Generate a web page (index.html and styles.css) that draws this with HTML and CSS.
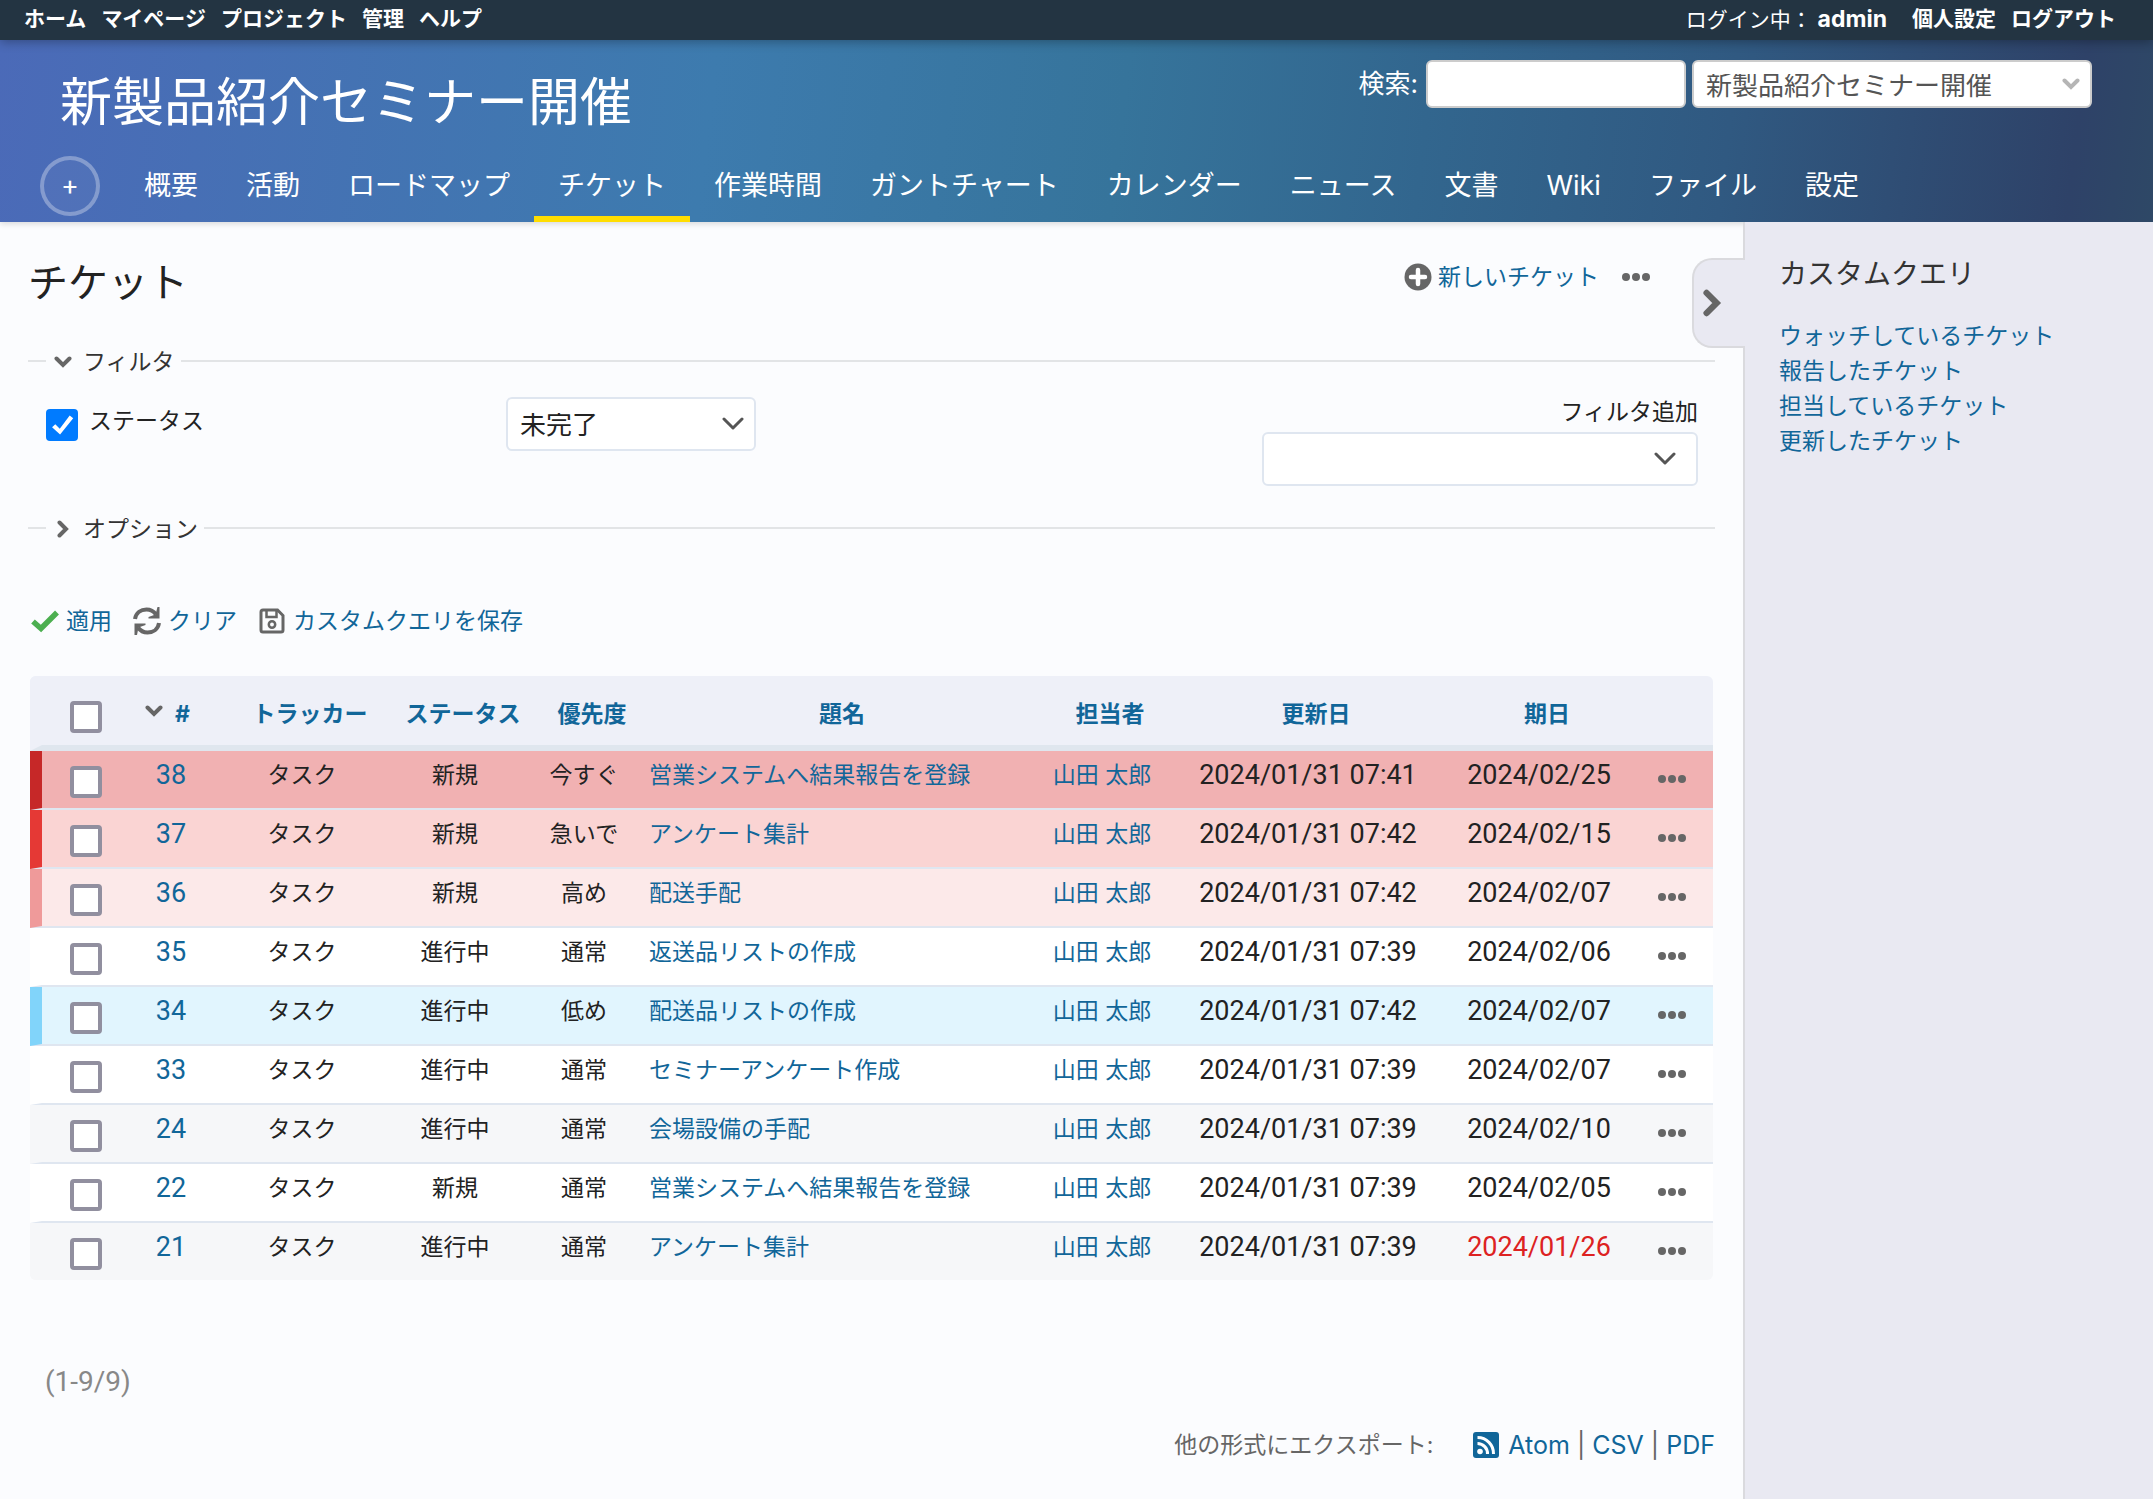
FILE: index.html
```html
<!DOCTYPE html>
<html lang="ja">
<head>
<meta charset="utf-8">
<title>チケット - 新製品紹介セミナー開催</title>
<link rel="stylesheet" href="styles.css">
</head>
<body>
<svg class="sprite" aria-hidden="true">
  <symbol id="i-down" viewBox="0 0 18 12"><path d="M2.500 2.500 9 9l6.500-6.500" fill="none" stroke="currentColor" stroke-width="4" stroke-linecap="round" stroke-linejoin="miter"/></symbol>
  <symbol id="i-down-thin" viewBox="0 0 22 14"><path d="M2 2l9 9 9-9" fill="none" stroke="currentColor" stroke-width="3" stroke-linecap="round" stroke-linejoin="round"/></symbol>
  <symbol id="i-right" viewBox="0 0 12 18"><path d="M2.500 2.500 9 9l-6.500 6.500" fill="none" stroke="currentColor" stroke-width="4" stroke-linecap="round"/></symbol>
  <symbol id="i-dots" viewBox="0 0 28 8"><circle cx="4" cy="4" r="4"/><circle cx="14" cy="4" r="4"/><circle cx="24" cy="4" r="4"/></symbol>
  <symbol id="i-add" viewBox="0 0 28 28"><circle cx="14" cy="14" r="13.500"/><path d="M14 7v14M7 14h14" stroke="#fff" stroke-width="4.500" stroke-linecap="round"/></symbol>
  <symbol id="i-check" viewBox="0 0 30 24"><path d="M3 12.500 11 19.500 27 3.500" fill="none" stroke="currentColor" stroke-width="5.500"/></symbol>
  <symbol id="i-reload" viewBox="0 0 30 30"><path d="M3 13C4 6.500 9 3.500 14.500 3.500c4 0 7 1.500 9.500 5M27 17c-1 6.500-6 9.500-11.500 9.500-4 0-7-1.500-9.500-5" fill="none" stroke="currentColor" stroke-width="4"/><path d="M27.500 1v11.500H16.500v-1.500l7-2.500 2-7.500zM2.500 29V17.500h11V19l-7 2.500-1.500 7.500z" fill="currentColor"/></symbol>
  <symbol id="i-save" viewBox="0 0 26 26"><path d="M4 2h14.500L24 7.500V22q0 2-2 2H4q-2 0-2-2V4q0-2 2-2z" fill="none" stroke="currentColor" stroke-width="3"/><path d="M7.500 2.500v6.500h10V2.500" fill="none" stroke="currentColor" stroke-width="2.500"/><circle cx="13" cy="16.500" r="3.200" fill="none" stroke="currentColor" stroke-width="2.500"/></symbol>
  <symbol id="i-feed" viewBox="0 0 26 26"><rect width="26" height="26" rx="3" fill="currentColor"/><circle cx="7" cy="19.500" r="2.800" fill="#fff"/><path d="M4.500 11.500A10 10 0 0 1 14.500 22M4.500 5.500A16 16 0 0 1 20.500 22" fill="none" stroke="#fff" stroke-width="3"/></symbol>
</svg>

<div class="topbar">
  <nav class="topnav">
    <a href="#">ホーム</a><a href="#">マイページ</a><a href="#">プロジェクト</a><a href="#">管理</a><a href="#">ヘルプ</a>
  </nav>
  <div class="account">
    <span class="logged">ログイン中： <a class="user" href="#">admin</a></span>
    <a href="#">個人設定</a><a href="#">ログアウト</a>
  </div>
</div>

<header class="header">
  <div class="header-row">
    <h1>新製品紹介セミナー開催</h1>
    <form class="search">
      <label for="q">検索:</label>
      <input id="q" type="text">
      <div class="picker jump">
        <select aria-label="プロジェクト"><option>新製品紹介セミナー開催</option></select>
        <svg><use href="#i-down"/></svg>
      </div>
    </form>
  </div>
  <nav class="menu">
    <button class="plus" type="button">+</button>
    <a href="#">概要</a><a href="#">活動</a><a href="#">ロードマップ</a><a class="current" href="#">チケット</a><a href="#">作業時間</a><a href="#">ガントチャート</a><a href="#">カレンダー</a><a href="#">ニュース</a><a href="#">文書</a><a href="#">Wiki</a><a href="#">ファイル</a><a href="#">設定</a>
  </nav>
</header>

<div class="page">
  <main class="main">
    <div class="title-row">
      <h2>チケット</h2>
      <div class="contextual">
        <a href="#"><svg class="add"><use href="#i-add"/></svg>新しいチケット</a>
        <button class="dots" type="button" aria-label="操作"><svg><use href="#i-dots"/></svg></button>
      </div>
    </div>

    <fieldset class="group filters">
      <legend><button type="button"><svg class="tri"><use href="#i-down"/></svg>フィルタ</button></legend>
      <div class="filter-body">
        <div class="filter-name"><input id="st" type="checkbox" checked><label for="st">ステータス</label></div>
        <div class="picker status">
          <select aria-label="ステータスの条件"><option>未完了</option></select>
          <svg><use href="#i-down-thin"/></svg>
        </div>
        <div class="filter-add">
          <label for="add">フィルタ追加</label>
          <div class="picker">
            <select id="add"><option></option></select>
            <svg><use href="#i-down-thin"/></svg>
          </div>
        </div>
      </div>
    </fieldset>
    <fieldset class="group">
      <legend><button type="button"><svg class="tri"><use href="#i-right"/></svg>オプション</button></legend>
    </fieldset>

    <div class="actions">
      <a href="#"><svg class="ok"><use href="#i-check"/></svg>適用</a>
      <a href="#"><svg><use href="#i-reload"/></svg>クリア</a>
      <a href="#"><svg class="save"><use href="#i-save"/></svg>カスタムクエリを保存</a>
    </div>

    <table class="issues">
      <colgroup><col class="c-check"><col class="c-id"><col class="c-tracker"><col class="c-status"><col class="c-priority"><col><col class="c-user"><col class="c-updated"><col class="c-due"><col class="c-menu"></colgroup>
      <thead>
        <tr><th class="check"><input type="checkbox" aria-label="すべて選択"></th><th class="id"><a href="#"><svg><use href="#i-down"/></svg>#</a></th><th><a href="#">トラッカー</a></th><th><a href="#">ステータス</a></th><th><a href="#">優先度</a></th><th><a href="#">題名</a></th><th><a href="#">担当者</a></th><th><a href="#">更新日</a></th><th><a href="#">期日</a></th><th></th></tr>
      </thead>
      <tbody>
        <tr class="p5"><td class="check"><input type="checkbox" aria-label="38"></td><td class="num"><a href="#">38</a></td><td>タスク</td><td>新規</td><td>今すぐ</td><td class="subject"><a href="#">営業システムへ結果報告を登録</a></td><td><a href="#">山田 太郎</a></td><td class="num">2024/01/31 07:41</td><td class="num">2024/02/25</td><td class="menu-cell"><button class="dots" type="button" aria-label="操作"><svg><use href="#i-dots"/></svg></button></td></tr>
        <tr class="p4"><td class="check"><input type="checkbox" aria-label="37"></td><td class="num"><a href="#">37</a></td><td>タスク</td><td>新規</td><td>急いで</td><td class="subject"><a href="#">アンケート集計</a></td><td><a href="#">山田 太郎</a></td><td class="num">2024/01/31 07:42</td><td class="num">2024/02/15</td><td class="menu-cell"><button class="dots" type="button" aria-label="操作"><svg><use href="#i-dots"/></svg></button></td></tr>
        <tr class="p3"><td class="check"><input type="checkbox" aria-label="36"></td><td class="num"><a href="#">36</a></td><td>タスク</td><td>新規</td><td>高め</td><td class="subject"><a href="#">配送手配</a></td><td><a href="#">山田 太郎</a></td><td class="num">2024/01/31 07:42</td><td class="num">2024/02/07</td><td class="menu-cell"><button class="dots" type="button" aria-label="操作"><svg><use href="#i-dots"/></svg></button></td></tr>
        <tr><td class="check"><input type="checkbox" aria-label="35"></td><td class="num"><a href="#">35</a></td><td>タスク</td><td>進行中</td><td>通常</td><td class="subject"><a href="#">返送品リストの作成</a></td><td><a href="#">山田 太郎</a></td><td class="num">2024/01/31 07:39</td><td class="num">2024/02/06</td><td class="menu-cell"><button class="dots" type="button" aria-label="操作"><svg><use href="#i-dots"/></svg></button></td></tr>
        <tr class="p1"><td class="check"><input type="checkbox" aria-label="34"></td><td class="num"><a href="#">34</a></td><td>タスク</td><td>進行中</td><td>低め</td><td class="subject"><a href="#">配送品リストの作成</a></td><td><a href="#">山田 太郎</a></td><td class="num">2024/01/31 07:42</td><td class="num">2024/02/07</td><td class="menu-cell"><button class="dots" type="button" aria-label="操作"><svg><use href="#i-dots"/></svg></button></td></tr>
        <tr><td class="check"><input type="checkbox" aria-label="33"></td><td class="num"><a href="#">33</a></td><td>タスク</td><td>進行中</td><td>通常</td><td class="subject"><a href="#">セミナーアンケート作成</a></td><td><a href="#">山田 太郎</a></td><td class="num">2024/01/31 07:39</td><td class="num">2024/02/07</td><td class="menu-cell"><button class="dots" type="button" aria-label="操作"><svg><use href="#i-dots"/></svg></button></td></tr>
        <tr class="odd"><td class="check"><input type="checkbox" aria-label="24"></td><td class="num"><a href="#">24</a></td><td>タスク</td><td>進行中</td><td>通常</td><td class="subject"><a href="#">会場設備の手配</a></td><td><a href="#">山田 太郎</a></td><td class="num">2024/01/31 07:39</td><td class="num">2024/02/10</td><td class="menu-cell"><button class="dots" type="button" aria-label="操作"><svg><use href="#i-dots"/></svg></button></td></tr>
        <tr><td class="check"><input type="checkbox" aria-label="22"></td><td class="num"><a href="#">22</a></td><td>タスク</td><td>新規</td><td>通常</td><td class="subject"><a href="#">営業システムへ結果報告を登録</a></td><td><a href="#">山田 太郎</a></td><td class="num">2024/01/31 07:39</td><td class="num">2024/02/05</td><td class="menu-cell"><button class="dots" type="button" aria-label="操作"><svg><use href="#i-dots"/></svg></button></td></tr>
        <tr class="odd"><td class="check"><input type="checkbox" aria-label="21"></td><td class="num"><a href="#">21</a></td><td>タスク</td><td>進行中</td><td>通常</td><td class="subject"><a href="#">アンケート集計</a></td><td><a href="#">山田 太郎</a></td><td class="num">2024/01/31 07:39</td><td class="num overdue">2024/01/26</td><td class="menu-cell"><button class="dots" type="button" aria-label="操作"><svg><use href="#i-dots"/></svg></button></td></tr>
      </tbody>
    </table>

    <p class="pages">(1-9/9)</p>
    <p class="export"><span class="export-label">他の形式にエクスポート:</span><svg><use href="#i-feed"/></svg><span><a href="#">Atom</a> | <a href="#">CSV</a> | <a href="#">PDF</a></span></p>
  </main>

  <aside class="sidebar">
    <button class="collapse" type="button" aria-label="サイドバーを隠す"><svg><use href="#i-right"/></svg></button>
    <h3>カスタムクエリ</h3>
    <ul>
      <li><a href="#">ウォッチしているチケット</a></li>
      <li><a href="#">報告したチケット</a></li>
      <li><a href="#">担当しているチケット</a></li>
      <li><a href="#">更新したチケット</a></li>
    </ul>
  </aside>
</div>
</body>
</html>
```
FILE: styles.css
```css
* { box-sizing: border-box; }
body {
  margin: 0;
  min-height: 100vh;
  display: flex;
  flex-direction: column;
  background: #fbfcfe;
  color: #222;
  font: 23px/24px Inter, "Noto Sans CJK JP", sans-serif;
}
a { color: #169; text-decoration: none; }
button { border: 0; padding: 0; background: none; color: inherit; font: inherit; }
h1, h2, h3, p, ul { margin: 0; padding: 0; font-weight: 400; }
input, select { margin: 0; font: inherit; }
svg { display: block; flex: none; }
.sprite { position: absolute; width: 0; height: 0; }

/* top bar */
.topbar {
  position: relative;
  z-index: 1;
  display: flex;
  justify-content: space-between;
  height: 40px;
  padding: 0 37px 0 24px;
  background: #233442;
  box-shadow: 0 2px 10px rgba(0, 0, 0, .3);
  color: #fff;
  font-size: 21px;
  line-height: 38px;
}
.topbar a { color: #fff; font-weight: 700; }
.topnav, .account { display: flex; gap: 15px; }
.logged { margin-right: 10px; }
.topbar .user { font-size: 23px; }

/* project header */
.header {
  background: linear-gradient(97deg, #4b6ab8 0%, #3d7bae 33%, #36749b 52%, #32668e 66%, #305981 80%, #2e4268 96%, #2e4866 100%);
  box-shadow: 0 2px 6px rgba(0, 0, 0, .14);
  color: #fff;
  font-size: 27px;
}
.header-row { display: flex; justify-content: space-between; align-items: flex-start; padding: 20px 61px 0 60px; }
h1 { padding-top: 10px; font-size: 52px; line-height: 66px; }
.search { display: flex; align-items: center; gap: 6px; }
.search label { margin-right: 2px; font-size: 26px; }
.search input { width: 260px; height: 48px; border: 2px solid #ccc; border-radius: 6px; background: #fff; }
.picker { display: grid; align-items: center; }
.picker > * { grid-area: 1 / 1; }
.picker select {
  appearance: none;
  width: 100%;
  height: 54px;
  padding: 2px 12px 0;
  border: 2px solid #dfe6f0;
  border-radius: 6px;
  background: #fff;
  color: #222;
  font-size: 26px;
}
.picker svg { width: 22px; height: 14px; margin-right: 22px; justify-self: end; color: #555; pointer-events: none; }
.status svg { margin-right: 12px; }
.jump { width: 400px; }
.jump select { height: 48px; padding-top: 4px; border-color: #ccc; color: #555; }
.jump svg { width: 18px; height: 12px; margin-right: 12px; color: #b5b5b5; }

.menu { display: flex; padding: 20px 0 0 40px; }
.menu .plus {
  width: 60px;
  height: 60px;
  margin-right: 20px;
  border: 4px solid rgba(255, 255, 255, .3);
  border-radius: 50%;
  background: rgba(255, 255, 255, .04);
}
.menu a { height: 66px; padding: 0 24px; color: #fff; line-height: 60px; }
.menu .current { border-bottom: 6px solid #fd0; }

/* page */
.page { flex: 1; display: flex; }
.main { flex: 1; min-width: 0; padding: 31px 28px 0; }
.title-row { display: flex; justify-content: space-between; align-items: flex-start; }
h2 { font-size: 40px; line-height: 60px; }
.contextual { display: flex; align-items: center; gap: 23px; margin: 9px 65px 0 0; line-height: 30px; }
.contextual a { display: flex; align-items: center; gap: 6px; }
.add { width: 28px; height: 28px; fill: #666; }
.dots svg { width: 28px; height: 8px; fill: #666; }

.group { margin: 33px 0 0; padding: 0; border: 0; border-top: 2px solid #e2e4e6; min-width: 0; }
.group + .group { margin-top: 27px; }
.group legend { margin-left: 18px; padding: 2px 6px 0 8px; line-height: 28px; color: #333; }
.group legend button { display: flex; align-items: center; gap: 11px; }
.tri { width: 18px; height: 18px; color: #666; }
.filter-body { display: grid; grid-template-columns: 460px 250px 1fr; padding: 21px 17px 0 18px; align-items: start; }
.filter-name { display: flex; align-items: flex-start; gap: 11px; padding-top: 12px; }
.filter-add { display: grid; justify-items: end; gap: 8px; padding-top: 3px; }
.filter-add .picker { width: 436px; }

input[type="checkbox"] {
  appearance: none;
  display: block;
  width: 32px;
  height: 32px;
  border: 4px solid #918f9f;
  border-radius: 4px;
  background: #fff;
}
input[type="checkbox"]:checked { border: 0; background: #007bff; }
input[type="checkbox"]:checked::before {
  content: "";
  display: block;
  width: 32px;
  height: 32px;
  background: #fff;
  clip-path: polygon(19% 57%, 29% 48%, 43% 62%, 74% 20%, 85% 29%, 44% 80%);
}

.actions { display: flex; gap: 20px; margin: 63px 0 0 2px; line-height: 30px; }
.actions a { display: flex; align-items: center; gap: 6px; }
.actions svg { width: 30px; height: 30px; color: #666; }
.actions .ok { height: 24px; color: #4caf50; }
.actions .save { width: 26px; height: 26px; margin: 0 2px; }

/* issue list */
.issues {
  table-layout: fixed;
  width: calc(100% - 4px);
  margin: 40px 2px 0;
  border-spacing: 0;
  border-radius: 6px;
  overflow: hidden;
  text-align: center;
}
.c-check { width: 95px; }
.c-id { width: 108px; }
.c-tracker { width: 154px; }
.c-status { width: 152px; }
.c-priority { width: 106px; }
.c-user { width: 142px; }
.c-updated { width: 270px; }
.c-due { width: 192px; }
.c-menu { width: 70px; }
.issues th { height: 75px; padding: 26px 0 0; border-bottom: 6px solid #dfe6ee; background: #eef0f8; vertical-align: top; }
.issues .id a { display: flex; align-items: center; gap: 12px; padding-left: 20px; }
.id svg { width: 18px; height: 12px; margin-bottom: 6px; color: #666; }
.issues td { height: 59px; padding: 12px 16px 0 0; border-bottom: 2px solid #dfe6f0; background: #fff; vertical-align: top; }
.issues tr:last-child td { height: 57px; border-bottom: 0; }
.issues .subject { padding-left: 4px; text-align: left; }
.issues .num { font-family: Roboto, sans-serif; font-size: 27px; white-space: nowrap; }
.issues .check { padding: 15px 0 0 28px; border-left: 12px solid #fff; }
.issues th.check { padding-top: 25px; border-left-color: #eef0f8; }
.issues .menu-cell { padding: 16px 0 0 15px; text-align: left; }
.dots { display: flex; align-items: center; height: 24px; }
.issues .odd td { background: #f6f7f9; }
.issues .odd .check { border-left-color: #f6f7f9; }
.issues .p5 td { background: #f1b1b2; }
.issues .p5 .check { border-left-color: #c62828; }
.issues .p4 td { background: #fad4d3; }
.issues .p4 .check { border-left-color: #e53935; }
.issues .p3 td { background: #fce9e9; }
.issues .p3 .check { border-left-color: #ef9a9a; }
.issues .p1 td { background: #e1f5fe; }
.issues .p1 .check { border-left-color: #81d4fa; }
.issues .overdue { color: #d22; }

.pages { margin: 86px 17px 0; color: #888; font-family: Roboto, sans-serif; font-size: 28px; line-height: 32px; }
.export { display: flex; justify-content: flex-end; align-items: center; margin-top: 32px; color: #666; font-size: 25px; line-height: 30px; }
.export-label { margin-right: 40px; font-size: 23px; }
.export svg { width: 26px; height: 26px; margin-right: 9px; color: #169; }

/* sidebar */
.sidebar { position: relative; width: 410px; padding: 32px 34px; border-left: 2px solid #dadade; background: #e9e9f2; }
.sidebar h3 { margin-bottom: 25px; color: #333; font-size: 28px; line-height: 40px; }
.sidebar ul { list-style: none; line-height: 35px; }
.collapse {
  position: absolute;
  top: 36px;
  left: -53px;
  width: 53px;
  height: 90px;
  padding-left: 8px;
  border: 2px solid #dadade;
  border-right: 0;
  border-radius: 20px 0 0 20px;
  background: #e9e9f2;
  color: #666;
}
.collapse svg { width: 20px; height: 28px; }
```
